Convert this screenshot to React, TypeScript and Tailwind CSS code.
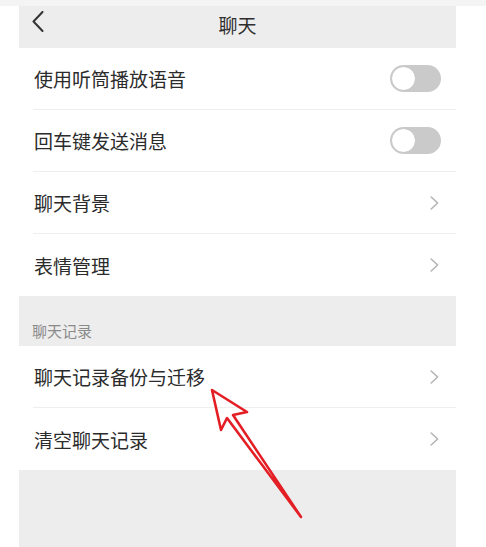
import React from "react";

const font = { fontFamily: '"Noto Sans CJK SC", "Noto Sans", sans-serif' };

function Toggle() {
  return (
    <div className="w-[51px] h-[27px] rounded-full bg-[#cacaca] flex items-center p-[1px]">
      <div className="w-[25px] h-[25px] rounded-full bg-white border border-[#c4c4c4]" />
    </div>
  );
}

function Chevron() {
  return (
    <svg width="9" height="14" viewBox="0 0 9 14" fill="none">
      <path d="M1.2 1 L7.6 7 L1.2 13" stroke="#b4b4b4" strokeWidth="1.6" strokeLinecap="round" strokeLinejoin="round" />
    </svg>
  );
}

function Row({ label, right, divider }: { label: string; right: "toggle" | "chevron"; divider: boolean }) {
  return (
    <div className="bg-white pl-[14px] h-[62px] flex">
      <div
        className={
          "flex-1 flex items-center justify-between pl-[1px] " +
          (right === "toggle" ? "pr-[15px] " : "pr-[17px] ") +
          (divider ? "border-b border-[#eeeeee]" : "")
        }
      >
        <span className="text-[19px] leading-none text-[#2b2b2b]">{label}</span>
        {right === "toggle" ? <Toggle /> : <Chevron />}
      </div>
    </div>
  );
}

export default function App() {
  return (
    <div className="relative w-[486px] h-[547px] bg-white flex flex-col overflow-hidden" style={font}>
      <div className="h-[6px] bg-[#f4f4f4] shrink-0" />
      <div className="ml-[19px] w-[437px] flex-1 flex flex-col bg-[#ededed]">
        <div className="h-[42px] grid grid-cols-[1fr_auto_1fr] items-start shrink-0">
          <div className="pl-[13px] pt-[5px]">
            <svg width="12" height="21" viewBox="0 0 12 21" fill="none">
              <path d="M10.5 1 L1.5 10.5 L10.5 20" stroke="#333333" strokeWidth="2" strokeLinecap="round" strokeLinejoin="round" />
            </svg>
          </div>
          <div className="mt-[9px] text-[19px] leading-[19px] text-[#2f2f2f]">聊天</div>
          <div />
        </div>
        <Row label="使用听筒播放语音" right="toggle" divider />
        <Row label="回车键发送消息" right="toggle" divider />
        <Row label="聊天背景" right="chevron" divider />
        <Row label="表情管理" right="chevron" divider={false} />
        <div className="h-[50px] flex items-end pl-[13px] pb-[8px] shrink-0">
          <span className="text-[15px] leading-none text-[#8a8a8a]">聊天记录</span>
        </div>
        <Row label="聊天记录备份与迁移" right="chevron" divider />
        <Row label="清空聊天记录" right="chevron" divider={false} />
      </div>
      <svg className="absolute top-0 left-0 pointer-events-none" width="486" height="547" viewBox="0 0 486 547" fill="none">
        <polygon
          points="212,390 247,412 233,415 301,517 227,418 221,430"
          stroke="#e31e24"
          strokeWidth="2.6"
          strokeLinejoin="round"
          strokeLinecap="round"
        />
      </svg>
    </div>
  );
}
